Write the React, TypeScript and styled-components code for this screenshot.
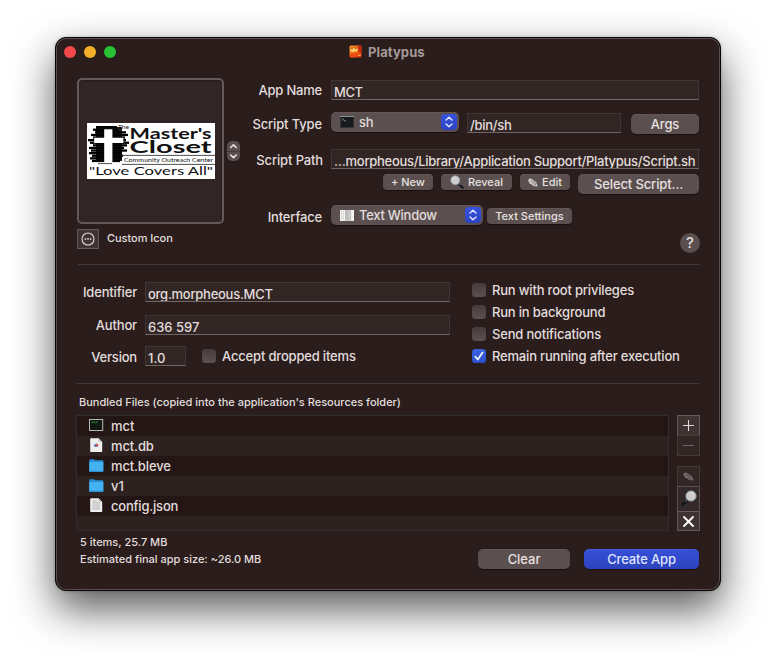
import React from "react";
import styled, { createGlobalStyle, css } from "styled-components";

const GlobalStyle = createGlobalStyle`
  html, body { margin: 0; background: #fff; }
  body { font-family: Inter, "Liberation Sans", sans-serif; overflow: hidden; }
  * { box-sizing: border-box; }
`;

const Desktop = styled.main`
  width: 776px;
  height: 664px;
  padding: 37px 55px;
  overflow: hidden;
  background: #fff;
`;

const Window = styled.section`
  width: 666px;
  height: 554px;
  display: flex;
  flex-direction: column;
  border: 1px solid #070505;
  border-radius: 11px;
  background: #2a1d1c;
  color: #e2dddc;
  box-shadow: inset 0 0 0 1px #5a4f4e, 0 18px 42px rgba(0, 0, 0, 0.66), 0 0 3px rgba(0, 0, 0, 0.25);
`;

const Text = styled.span<{ $small?: boolean; $track?: number }>`
  font-size: ${(p) => (p.$small ? 11 : 13)}px;
  line-height: 16px;
  font-weight: 500;
  letter-spacing: ${(p) => p.$track ?? (p.$small ? 0 : -0.16)}px;
  white-space: nowrap;
`;

const TitleBar = styled.header`
  height: 28px;
  display: grid;
  grid-template-columns: 293px 1fr;
  align-items: center;
`;

const Lights = styled.div`
  display: flex;
  gap: 8px;
  padding-left: 8px;
`;

const Light = styled.i<{ $color: string }>`
  width: 12px;
  height: 12px;
  border-radius: 50%;
  background: ${(p) => p.$color};
`;

const Title = styled.div`
  display: flex;
  align-items: center;
  gap: 6px;
  margin-top: -1px;
  color: #a39a99;
  font-size: 13px;
  line-height: 16px;
  font-weight: 700;
  letter-spacing: 0.1px;
`;

const General = styled.div`
  height: 198px;
  display: grid;
  grid-template-columns: 147px 16px 1fr;
  padding: 12px 20px 0 21px;
`;

const IconColumn = styled.div`
  display: flex;
  flex-direction: column;
  align-items: flex-start;
`;

const IconWell = styled.div`
  width: 147px;
  height: 146px;
  display: flex;
  align-items: center;
  justify-content: center;
  border: 2px solid #655a59;
  border-radius: 5px;
  background: #312625;
  box-shadow: inset 0 1px 2px rgba(0, 0, 0, 0.35);
`;

const CustomIcon = styled.div`
  display: flex;
  align-items: center;
  gap: 8px;
  margin-top: 5px;
`;

const CustomIconText = styled(Text)`
  margin-top: -2px;
`;

const SquareButton = styled.button<{ $width?: number; $height: number; $dim?: boolean; $joined?: boolean }>`
  width: ${(p) => p.$width ?? 23}px;
  height: ${(p) => p.$height}px;
  display: flex;
  align-items: center;
  justify-content: center;
  padding: 0;
  margin-top: ${(p) => (p.$joined ? -1 : 0)}px;
  border: 1px solid ${(p) => (p.$dim ? "#463a39" : "#665b5a")};
  background: ${(p) => (p.$dim ? "#332726" : "#403433")};
`;

const RevealButton = styled(SquareButton)`
  border-color: #5a4f4e;
  background: #33292a;
  padding-bottom: 2px;
`;

const StepperColumn = styled.div`
  padding: 63px 0 0 3px;
`;

const Stepper = styled.div`
  width: 13px;
  height: 20px;
  border-radius: 5px;
  background: #5b504f;
  display: flex;
`;

const Form = styled.div`
  display: flex;
  flex-direction: column;
`;

const FormRow = styled.div<{ $height: number }>`
  height: ${(p) => p.$height}px;
  display: flex;
  align-items: flex-start;
`;

const Label = styled.label<{ $width: number; $drop?: number; $gap?: number }>`
  width: ${(p) => p.$width}px;
  flex: none;
  padding: ${(p) => p.$drop ?? 1}px ${(p) => p.$gap ?? 9}px 0 0;
  text-align: right;
  line-height: 16px;
`;

const Field = styled.div<{ $width: number; $drop?: number; $left?: number }>`
  width: ${(p) => p.$width}px;
  height: 20px;
  flex: none;
  display: flex;
  align-items: flex-start;
  margin-top: ${(p) => p.$drop ?? 0}px;
  margin-left: ${(p) => p.$left ?? 0}px;
  padding: 3px 2px 0;
  border: 1px solid;
  border-color: #423635 #413635 #726766;
  background: #322625;
  overflow: hidden;
`;

const Button = styled.button<{ $width: number; $small?: boolean; $primary?: boolean; $left?: number; $drop?: number }>`
  width: ${(p) => p.$width}px;
  height: ${(p) => (p.$small ? 16 : 20)}px;
  flex: none;
  display: flex;
  align-items: center;
  justify-content: center;
  gap: 4px;
  padding: 0 0 ${(p) => (p.$small ? 0 : 1)}px;
  margin: ${(p) => p.$drop ?? 0}px 0 0 ${(p) => p.$left ?? 0}px;
  border: 0;
  border-radius: ${(p) => (p.$small ? 4 : 5)}px;
  font-family: inherit;
  color: #e6e1e0;
  background: #5b504f;
  box-shadow: inset 0 0.5px 0 rgba(255, 255, 255, 0.1), 0 0.5px 1px rgba(0, 0, 0, 0.45);
  ${(p) =>
    p.$primary &&
    css`
      background: linear-gradient(#3650d8, #2d43bd);
      color: #dfe4fb;
    `}
`;

const Popup = styled.div<{ $width: number; $inset: number }>`
  width: ${(p) => p.$width}px;
  height: 20px;
  flex: none;
  display: flex;
  align-items: center;
  padding: 0 2px 0 ${(p) => p.$inset}px;
  border-radius: 5px;
  background: #5b504f;
  box-shadow: inset 0 0.5px 0 rgba(255, 255, 255, 0.1), 0 0.5px 1px rgba(0, 0, 0, 0.45);
`;

const PopupText = styled(Text)`
  flex: 1;
  padding-left: 5px;
  margin-top: -1px;
`;

const PopupCap = styled.div`
  width: 16px;
  height: 16px;
  display: flex;
  border-radius: 4px;
  background: linear-gradient(#3652df, #2c43c0);
`;

const HelpLine = styled.div`
  display: flex;
  justify-content: flex-end;
`;

const Help = styled.button`
  width: 20px;
  height: 20px;
  padding: 0;
  border: 0;
  border-radius: 50%;
  background: #5b504f;
  color: #e0dbda;
  font: 500 15px/20px Inter, sans-serif;
`;

const Divider = styled.hr<{ $left: number; $right: number }>`
  height: 1px;
  flex: none;
  margin: 0 ${(p) => p.$right}px 0 ${(p) => p.$left}px;
  border: 0;
  background: #43393a;
`;

const Metadata = styled.div`
  height: 118px;
  display: grid;
  grid-template-columns: 394px 1fr;
  padding: 17px 20px 0 21px;
`;

const Options = styled.div`
  display: flex;
  flex-direction: column;
  gap: 6px;
  padding: 0 0 0 1px;
`;

const Option = styled.div<{ $left?: number; $drop?: number }>`
  height: 16px;
  display: flex;
  align-items: center;
  gap: 6px;
  margin: ${(p) => p.$drop ?? 0}px 0 0 ${(p) => p.$left ?? 0}px;
`;

const Checkbox = styled.span<{ $on?: boolean }>`
  width: 14px;
  height: 14px;
  display: flex;
  border-radius: 3.5px;
  background: ${(p) => (p.$on ? "linear-gradient(#3d63e3, #2b50cd)" : "linear-gradient(#483c3b, #5c5150)")};
`;

const Files = styled.div`
  padding: 10px 20px 0 20px;
`;

const FilesHeading = styled.div`
  height: 21px;
  padding-left: 3px;
  display: flex;
`;

const FilesBody = styled.div`
  display: flex;
  justify-content: space-between;
`;

const Table = styled.div`
  width: 593px;
  height: 116px;
  border: 1px solid #2d2e2d;
  overflow: hidden;
  background: #241615;
`;

const FileRow = styled.div<{ $alt: boolean }>`
  height: 20px;
  display: grid;
  grid-template-columns: 22px 1fr;
  align-items: center;
  padding-left: 12px;
  background: ${(p) => (p.$alt ? "#2d2220" : "#241615")};
`;

const Tools = styled.div`
  display: flex;
  flex-direction: column;
`;

const ToolGap = styled.div`
  height: 10px;
`;

const Footer = styled.footer`
  display: flex;
  padding: 3px 20px 0 24px;
`;

const Stats = styled.div`
  width: 398px;
  display: flex;
  flex-direction: column;
  gap: 1px;
`;

const PlatypusIcon = () => (
  <svg width="13" height="13" viewBox="0 0 13 13">
    <defs>
      <linearGradient id="pl" x1="0" y1="0" x2="1" y2="1">
        <stop offset="0" stopColor="#f6a023" />
        <stop offset="0.5" stopColor="#f0641a" />
        <stop offset="1" stopColor="#d8280c" />
      </linearGradient>
    </defs>
    <rect x="0.5" y="0.5" width="12" height="12" rx="1.5" fill="url(#pl)" />
    <path d="M9 0.7H12.3V8L9.4 6Z" fill="#c32410" />
    <path d="M1 6 Q1 3 4 3 H7.5 Q9.2 3.6 8.6 6 Q7 7.4 3 7Z" fill="#ffc763" />
    <path d="M2 3.2h2M5.6 3.2h2" stroke="#8a2d0b" strokeWidth="0.9" />
    <path d="M1 9.2 Q4 7.6 8 9.6 L7 12.2H1.4Z" fill="#f04a14" />
    <path d="M9.2 10.4h2.6" stroke="#ffb347" strokeWidth="1.2" />
  </svg>
);

const BAND_ROWS: [number, number, number][] = [
  [9, 30, 3], [6, 31, 5.6], [8, 39, 8.2], [4, 41, 10.8], [6, 38, 13.4], [1, 39, 16], [3, 42, 18.6],
  [6, 40, 21.2], [2, 37, 23.8], [4, 40, 26.4], [2, 35, 29], [5, 36, 31.6], [3, 35, 34.2], [5, 33, 36.8],
];

const ClosetLogo = () => (
  <svg width="128" height="56" viewBox="0 0 128 56">
    <rect width="128" height="56" fill="#fff" />
    <rect x="9" y="4" width="26" height="34" fill="#1c1c1c" />
    {BAND_ROWS.map(([a, b, y]) => (
      <rect key={y} x={a} y={y} width={b - a} height="2.3" fill="#020202" />
    ))}
    <path d="M17.2 6.3H25.4V14.7H36.3V20H25.4V40H17.2V20H7.2V14.7H17.2Z" fill="#fff" />
    <path d="M34 32.4H128M35 41.4H128M11 40.6H25" stroke="#222" strokeWidth="0.8" />
    <g fill="#111" fontFamily="Lato, Inter, sans-serif">
      <text x="31" y="5.6" fontSize="6" textLength="11" lengthAdjust="spacingAndGlyphs">The</text>
      <text x="42.6" y="16" fontSize="16" fontWeight="700" textLength="82" lengthAdjust="spacingAndGlyphs">Master's</text>
      <text x="42.6" y="30.4" fontSize="16.3" fontWeight="700" textLength="82" lengthAdjust="spacingAndGlyphs">Closet</text>
      <text x="37" y="38.9" fontSize="6.5" textLength="89" lengthAdjust="spacingAndGlyphs">Community Outreach Center</text>
      <text x="2" y="51.8" fontSize="11.2" textLength="124" lengthAdjust="spacingAndGlyphs">"Love Covers All"</text>
    </g>
  </svg>
);

const MoreIcon = () => (
  <svg width="14" height="14" viewBox="0 0 14 14" fill="none" stroke="#dcd7d6">
    <circle cx="7" cy="7" r="6" strokeWidth="1.1" />
    <path d="M3.6 7h1.6M6.2 7h1.6M8.8 7h1.6" strokeWidth="1.5" />
  </svg>
);

const StepperIcon = () => (
  <svg width="13" height="20" viewBox="0 0 13 20" fill="none" stroke="#e6e1e0" strokeWidth="1.6" strokeLinecap="round" strokeLinejoin="round">
    <path d="M0 10.5H13" stroke="#463b3a" strokeWidth="1" />
    <path d="M3.7 6.5L6.5 3.8L9.3 6.5M3.7 14L6.5 16.7L9.3 14" />
  </svg>
);

const UpDownIcon = () => (
  <svg width="16" height="16" viewBox="0 0 16 16" fill="none" stroke="#e5eaff" strokeWidth="1.4" strokeLinecap="round" strokeLinejoin="round">
    <path d="M5 6L8 3.2L11 6M5 10L8 12.8L11 10" />
  </svg>
);

const TerminalIcon = () => (
  <svg width="14" height="12" viewBox="0 0 14 12">
    <rect width="14" height="12" fill="#3c3d3e" />
    <rect x="0.8" y="1" width="12.4" height="10.2" fill="#17191a" />
    <path d="M0 0.5H14" stroke="#7d979c" />
    <path d="M2.2 2.5L3.4 3.4L2.2 4.3M4.2 4.8H5.8" stroke="#b9bdbd" strokeWidth="0.8" fill="none" />
  </svg>
);

const TextWindowIcon = () => (
  <svg width="14" height="11" viewBox="0 0 14 11">
    <rect width="14" height="11" fill="#f5f4f4" />
    <rect x="5.4" width="5" height="11" fill="#cfcccc" />
    <path d="M1.5 1V10M3.3 1V10" stroke="#b5b1b1" strokeDasharray="1.4 0.8" strokeWidth="0.7" />
    <path d="M5.6 0.5V10.5M7.4 1V10M10.6 0.5V10.5" stroke="#9a9696" strokeDasharray="2.2 0.6" strokeWidth="0.7" />
  </svg>
);

const Magnifier = ({ flip, size }: { flip?: boolean; size: number }) => (
  <svg width={size} height={size} viewBox="0 0 16 16">
    <g transform={flip ? "translate(16 0) scale(-1 1)" : undefined}>
      <path d="M9.5 10L14.5 14.6" stroke="#10171b" strokeWidth="2.6" strokeLinecap="round" />
      <path d="M9.6 9.4L11.5 11.2" stroke="#627782" strokeWidth="1.2" />
      <circle cx="6" cy="6" r="5.1" fill="#cfcccd" stroke="#8fa0a9" strokeWidth="1" />
      <path d="M2.8 5.5Q3.5 2.8 6.5 2.8" stroke="#e6e4e4" fill="none" />
    </g>
  </svg>
);

const Pencil = ({ color, width }: { color: string; width: number }) => (
  <svg width={width} height="9" viewBox="0 0 12 9" preserveAspectRatio="none">
    <path d="M0.6 1.4Q2.2 -0.2 4.6 1L10 4.4L11.6 8.3L7.4 8.3L2 5.2Q0.1 3.4 0.6 1.4Z" fill={color} />
    <path d="M2.3 2.4L8.4 6.9M4.2 2L9.2 5.6" stroke="#4a3f3e" strokeWidth="0.6" />
    <path d="M10 4.9L8 8" stroke="#4a3f3e" strokeWidth="0.5" />
  </svg>
);

const CheckIcon = () => (
  <svg width="14" height="14" viewBox="0 0 14 14" fill="none" stroke="#f1f4ff" strokeWidth="1.8" strokeLinecap="round" strokeLinejoin="round">
    <path d="M3.3 7.6L5.8 10.5L10.6 3.6" />
  </svg>
);

type FileKind = "exec" | "db" | "folder" | "json";

const FileIcon = ({ kind }: { kind: FileKind }) => (
  <svg width="15" height="16" viewBox="0 0 15 16">
    {kind === "exec" && (
      <>
        <rect x="0.5" y="1.5" width="13.2" height="11" fill="#131815" stroke="#b5b8b6" />
        <path d="M2.6 4.2H8.6" stroke="#25c43b" strokeWidth="1" strokeDasharray="1.6 0.7" />
      </>
    )}
    {kind === "folder" && (
      <>
        <path d="M0.3 2Q0.3 1.2 1.1 1.2H5L6.2 2.3H13.6Q14.3 2.3 14.3 3V13.3H0.3Z" fill="#2790d8" />
        <path d="M0.3 4H14.3V13Q14.3 13.8 13.5 13.8H1.1Q0.3 13.8 0.3 13Z" fill="#45b2f2" />
        <path d="M0.3 13.3H14.3" stroke="#2c8ccd" />
      </>
    )}
    {(kind === "db" || kind === "json") && (
      <>
        <path d="M1.2 1Q1.2 0.3 2 0.3H9.5L13.2 4V13.2Q13.2 14 12.4 14H2Q1.2 14 1.2 13.2Z" fill="#f0efef" />
        <path d="M9.5 0.3V4H13.2Z" fill="#c7c5c5" />
      </>
    )}
    {kind === "db" && (
      <>
        <path d="M4.6 7.8Q5 5.6 7.5 5.4L7.2 8.6Z" fill="#5b7fb8" />
        <path d="M7.3 5.4Q9.7 5.6 9.7 7.6L7.2 8Z" fill="#c9382d" />
        <path d="M5.2 8Q6 10 9.4 8.2L7.4 7.4Z" fill="#7c6e85" />
      </>
    )}
    {kind === "json" && (
      <path d="M3.2 3H8M3.2 5H11.2M3.2 7H11.2M3.2 9H11.2M3.2 11H11.2" stroke="#a7a4a4" strokeWidth="0.8" />
    )}
  </svg>
);

const FILES: { name: string; kind: FileKind; track: number }[] = [
  { name: "mct", kind: "exec", track: -0.05 },
  { name: "mct.db", kind: "db", track: -0.12 },
  { name: "mct.bleve", kind: "folder", track: -0.14 },
  { name: "v1", kind: "folder", track: 0 },
  { name: "config.json", kind: "json", track: -0.2 },
];

const OPTIONS = [
  { label: "Run with root privileges", on: false },
  { label: "Run in background", on: false },
  { label: "Send notifications", on: false },
  { label: "Remain running after execution", on: true },
];

export default function App() {
  return (
    <>
      <GlobalStyle />
      <Desktop>
        <Window>
          <TitleBar>
            <Lights>
              <Light $color="#f4484a" />
              <Light $color="#f2ae27" />
              <Light $color="#27c134" />
            </Lights>
            <Title>
              <PlatypusIcon />
              Platypus
            </Title>
          </TitleBar>

          <General>
            <IconColumn>
              <IconWell>
                <ClosetLogo />
              </IconWell>
              <CustomIcon>
                <SquareButton $width={22} $height={20}>
                  <MoreIcon />
                </SquareButton>
                <CustomIconText $small $track={-0.04}>Custom Icon</CustomIconText>
              </CustomIcon>
            </IconColumn>
            <StepperColumn>
              <Stepper>
                <StepperIcon />
              </Stepper>
            </StepperColumn>
            <Form>
              <FormRow $height={34}>
                <Label $width={91} $drop={3}>
                  <Text $track={-0.21}>App Name</Text>
                </Label>
                <Field $width={368} $drop={2}>
                  <Text $track={-0.4}>MCT</Text>
                </Field>
              </FormRow>
              <FormRow $height={39}>
                <Label $width={91} $drop={3}>
                  <Text $track={-0.14}>Script Type</Text>
                </Label>
                <Popup $width={128} $inset={9}>
                  <TerminalIcon />
                  <PopupText>sh</PopupText>
                  <PopupCap>
                    <UpDownIcon />
                  </PopupCap>
                </Popup>
                <Field $width={154} $drop={1} $left={8}>
                  <Text $track={-0.28}>/bin/sh</Text>
                </Field>
                <Button $width={68} $left={10} $drop={2}>
                  <Text>Args</Text>
                </Button>
              </FormRow>
              <FormRow $height={25}>
                <Label $width={91} $drop={0} $gap={8}>
                  <Text $track={-0.14}>Script Path</Text>
                </Label>
                <Field $width={368} $drop={-2}>
                  <Text $track={-0.285}>…morpheous/Library/Application Support/Platypus/Script.sh</Text>
                </Field>
              </FormRow>
              <FormRow $height={29}>
                <Button $width={50} $small $left={143} $drop={-2}>
                  <Text $small>+ New</Text>
                </Button>
                <Button $width={71} $small $left={8} $drop={-2}>
                  <Magnifier size={14} />
                  <Text $small>Reveal</Text>
                </Button>
                <Button $width={50} $small $left={8} $drop={-2}>
                  <Pencil color="#d9d3d2" width={10} />
                  <Text $small>Edit</Text>
                </Button>
                <Button $width={121} $left={8} $drop={-2}>
                  <Text $track={-0.12}>Select Script...</Text>
                </Button>
              </FormRow>
              <FormRow $height={28}>
                <Label $width={91} $drop={3}>
                  <Text>Interface</Text>
                </Label>
                <Popup $width={152} $inset={9}>
                  <TextWindowIcon />
                  <PopupText $track={-0.27}>Text Window</PopupText>
                  <PopupCap>
                    <UpDownIcon />
                  </PopupCap>
                </Popup>
                <Button $width={85} $small $left={4} $drop={3}>
                  <Text $small>Text Settings</Text>
                </Button>
              </FormRow>
              <HelpLine>
                <Help>?</Help>
              </HelpLine>
            </Form>
          </General>

          <Divider $left={22} $right={20} />

          <Metadata>
            <Form>
              <FormRow $height={33}>
                <Label $width={68} $gap={8}>
                  <Text>Identifier</Text>
                </Label>
                <Field $width={305}>
                  <Text $track={-0.27}>org.morpheous.MCT</Text>
                </Field>
              </FormRow>
              <FormRow $height={31}>
                <Label $width={68} $gap={8}>
                  <Text $track={-0.14}>Author</Text>
                </Label>
                <Field $width={305}>
                  <Text $track={0}>636 597</Text>
                </Field>
              </FormRow>
              <FormRow $height={20}>
                <Label $width={68} $gap={8} $drop={2}>
                  <Text $track={-0.2}>Version</Text>
                </Label>
                <Field $width={41}>
                  <Text $track={0}>1.0</Text>
                </Field>
                <Option $left={16} $drop={2}>
                  <Checkbox />
                  <Text $track={-0.18}>Accept dropped items</Text>
                </Option>
              </FormRow>
            </Form>
            <Options>
              {OPTIONS.map((o) => (
                <Option key={o.label}>
                  <Checkbox $on={o.on}>{o.on && <CheckIcon />}</Checkbox>
                  <Text $track={-0.19}>{o.label}</Text>
                </Option>
              ))}
            </Options>
          </Metadata>

          <Divider $left={20} $right={21} />

          <Files>
            <FilesHeading>
              <Text $small>Bundled Files (copied into the application's Resources folder)</Text>
            </FilesHeading>
            <FilesBody>
              <Table>
                {FILES.map((f, i) => (
                  <FileRow key={f.name} $alt={i % 2 === 1}>
                    <FileIcon kind={f.kind} />
                    <Text $track={f.track}>{f.name}</Text>
                  </FileRow>
                ))}
                <FileRow $alt />
              </Table>
              <Tools>
                <SquareButton $height={21}>
                  <svg width="11" height="11" viewBox="0 0 11 11">
                    <path d="M0 5.5H11M5.5 0V11" stroke="#dfdad9" strokeWidth="1.1" />
                  </svg>
                </SquareButton>
                <SquareButton $height={21} $dim $joined>
                  <svg width="11" height="11" viewBox="0 0 11 11">
                    <path d="M0 5.5H11" stroke="#736867" strokeWidth="1" />
                  </svg>
                </SquareButton>
                <ToolGap />
                <SquareButton $height={21} $dim>
                  <Pencil color="#766b6a" width={11} />
                </SquareButton>
                <RevealButton $height={26} $joined>
                  <Magnifier size={16} flip />
                </RevealButton>
                <SquareButton $height={20} $joined>
                  <svg width="11" height="11" viewBox="0 0 11 11">
                    <path d="M1 1L10 10M10 1L1 10" stroke="#fff" strokeWidth="1.8" strokeLinecap="round" />
                  </svg>
                </SquareButton>
              </Tools>
            </FilesBody>
          </Files>

          <Footer>
            <Stats>
              <Text $small>5 items, 25.7 MB</Text>
              <Text $small>Estimated final app size: ~26.0 MB</Text>
            </Stats>
            <Button $width={92} $drop={15}>
              <Text $track={-0.05}>Clear</Text>
            </Button>
            <Button $width={115} $left={14} $drop={15} $primary>
              <Text>Create App</Text>
            </Button>
          </Footer>
        </Window>
      </Desktop>
    </>
  );
}
